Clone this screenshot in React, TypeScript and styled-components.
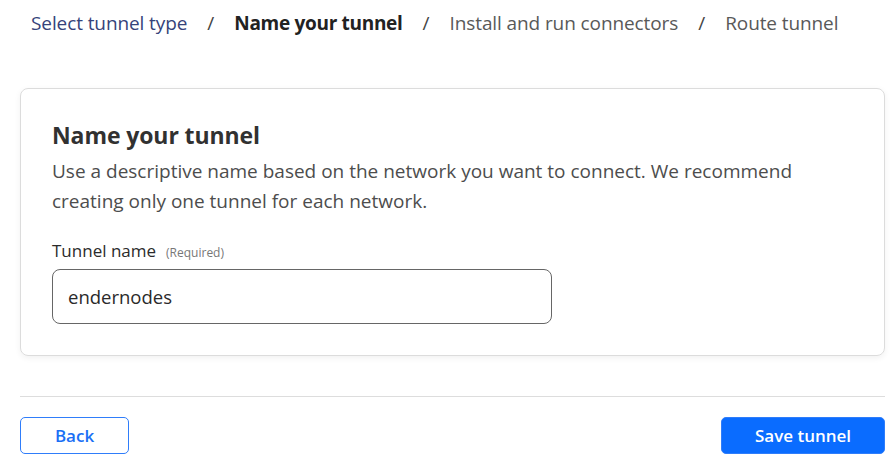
import styled, { createGlobalStyle } from "styled-components";

const GlobalStyle = createGlobalStyle`
	body {
		margin: 0;
		background: #ffffff;
		font-family: "Open Sans", "Noto Sans", Arial, sans-serif;
		color: #333333;
	}
`;

const Page = styled.div`
	box-sizing: border-box;
	width: 894px;
	padding: 0 9px 0 20px;
`;

const Breadcrumb = styled.nav`
	display: flex;
	align-items: center;
	height: 46px;
	padding-left: 11px;
	font-size: 19px;
	white-space: nowrap;
`;

const Crumb = styled.span<{ current?: boolean; done?: boolean }>`
	font-weight: ${(p) => (p.current ? 700 : 400)};
	color: ${(p) => (p.current ? "#222222" : p.done ? "#36437a" : "#595959")};
	letter-spacing: ${(p) => (p.current ? "-0.3px" : "-0.1px")};
`;

const Slash = styled.span`
	color: #444444;
	margin: 0 20px;
`;

const Card = styled.section`
	box-sizing: border-box;
	margin-top: 42px;
	height: 268px;
	border: 1px solid #dcdcdc;
	border-radius: 8px;
	box-shadow: 0 2px 6px rgba(0, 0, 0, 0.06);
	padding: 30px 31px;
`;

const Title = styled.h2`
	margin: 0;
	font-size: 23px;
	font-weight: 700;
	color: #313131;
	line-height: 32px;
	letter-spacing: -0.1px;
`;

const Description = styled.p`
	margin: 5px 0 0;
	font-size: 19px;
	line-height: 30px;
	color: #4d4d4d;
	max-width: 780px;
`;

const Label = styled.label`
	display: flex;
	align-items: baseline;
	gap: 10px;
	margin-top: 23px;
	font-size: 17px;
	color: #2b2b2b;
	line-height: 24px;
`;

const Hint = styled.span`
	font-size: 12px;
	color: #777777;
`;

const Input = styled.input`
	box-sizing: border-box;
	display: block;
	margin-top: 4px;
	width: 500px;
	height: 55px;
	border: 1px solid #666666;
	border-radius: 8px;
	padding: 0 15px;
	font-family: inherit;
	font-size: 18.5px;
	color: #2a2a2a;
	outline: none;
`;

const Divider = styled.hr`
	margin: 40px 0 0;
	border: none;
	border-top: 1px solid #dddddd;
`;

const Actions = styled.div`
	display: flex;
	justify-content: space-between;
	margin-top: 20px;
`;

const Button = styled.button<{ primary?: boolean }>`
	box-sizing: border-box;
	height: 37px;
	width: ${(p) => (p.primary ? "164px" : "109px")};
	border-radius: 5px;
	border: 1px solid #2f7dfa;
	background: ${(p) => (p.primary ? "#0a6cff" : "#ffffff")};
	color: ${(p) => (p.primary ? "#ffffff" : "#1a6ff5")};
	font-family: inherit;
	font-size: 17px;
	font-weight: 600;
	cursor: pointer;
`;

export default function App() {
	return (
		<>
			<GlobalStyle />
			<Page>
				<Breadcrumb>
					<Crumb done>Select tunnel type</Crumb>
					<Slash>/</Slash>
					<Crumb current>Name your tunnel</Crumb>
					<Slash>/</Slash>
					<Crumb>Install and run connectors</Crumb>
					<Slash>/</Slash>
					<Crumb>Route tunnel</Crumb>
				</Breadcrumb>
				<Card>
					<Title>Name your tunnel</Title>
					<Description>
						Use a descriptive name based on the network you want to connect. We
						recommend creating only one tunnel for each network.
					</Description>
					<Label>
						Tunnel name <Hint>(Required)</Hint>
					</Label>
					<Input defaultValue="endernodes" />
				</Card>
				<Divider />
				<Actions>
					<Button>Back</Button>
					<Button primary>Save tunnel</Button>
				</Actions>
			</Page>
		</>
	);
}
